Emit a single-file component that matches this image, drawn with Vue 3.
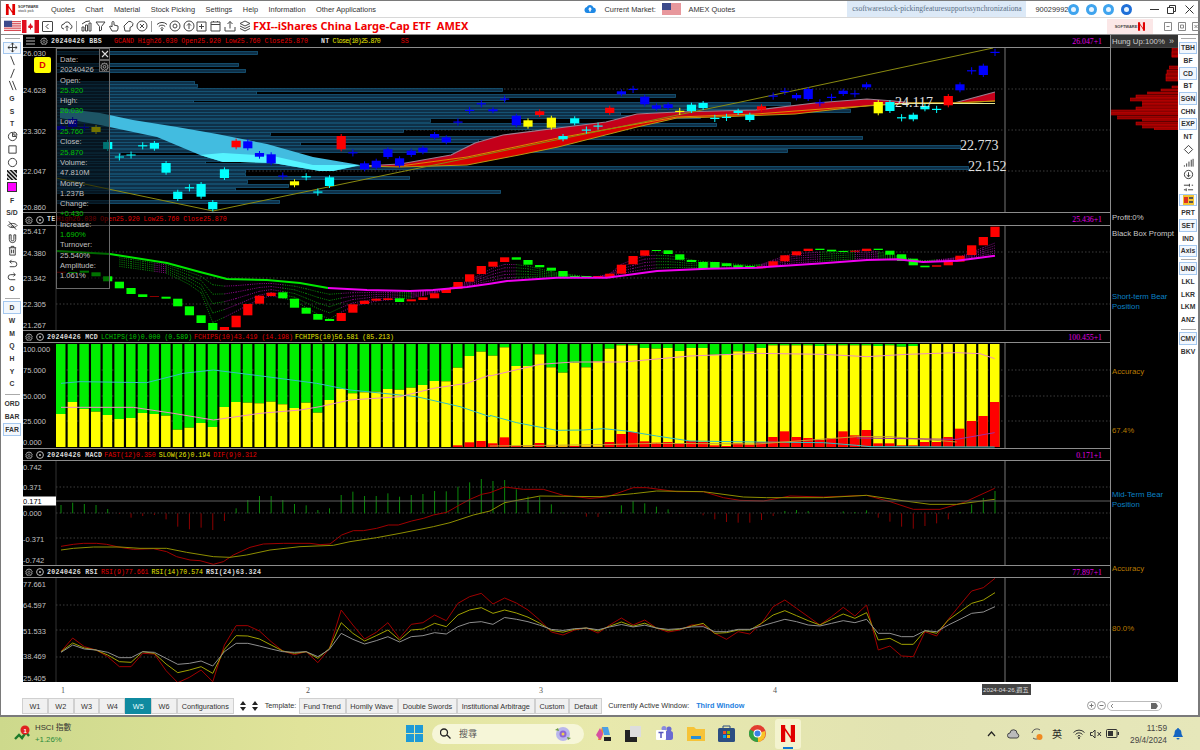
<script setup>
const X = i => 61 + 11.675 * i
const P = a => a.map(p => p.join(',')).join(' ')
const Z = (a, ox, oy) => a.map(([x, y]) => [ox + x / 3, oy + y / 3])
const lerp = (a, x) => {
  if (x <= a[0][0]) return a[0][1]
  for (let k = 1; k < a.length; k++) {
    if (x <= a[k][0]) {
      const t = (x - a[k - 1][0]) / (a[k][0] - a[k - 1][0])
      return a[k - 1][1] + (a[k][1] - a[k - 1][1]) * t
    }
  }
  return a[a.length - 1][1]
}
const colors = { b: '#0000ff', c: '#00ffff', y: '#ffff00', r: '#ff0000', g: '#00ff00', d: '#8b0000' }

/* chart 1 */
const raw1 = [[126,130,'b'],[119,127,'b'],[127,128,'b'],[127,132,'y'],[142,149,'c'],[156.5,157.5,'c'],[154.5,155.5,'c'],[145.2,146.4,'c'],[143,148.7,'c'],[163,172.7,'c'],[191.7,199,'c'],[187.2,188.4,'c'],[184,196.7,'c'],[202,209.3,'c'],[169.3,178,'c'],[140.7,147.3,'r'],[141.3,148.3,'b'],[153,156.7,'b'],[154.3,163.3,'b'],[175.5,176.7,'b'],[181.3,185.3,'y'],[176.2,177.4,'c'],[191.5,192.7,'c'],[177.3,186,'c'],[136,149.3,'r'],[152.2,153.4,'b'],[163.3,169.3,'b'],[160.7,167.7,'b'],[149.3,157,'b'],[158.3,165.7,'b'],[150.7,155,'b'],[147.7,152.3,'b'],[134,137.7,'b'],[137.3,142.3,'b'],[121.5,122.7,'b'],[109.8,111,'b'],[103.2,104.4,'b'],[109.3,111.3,'b'],[98.5,99.7,'b'],[115.7,125.3,'b'],[120.3,126.7,'y'],[111.3,115,'r'],[117.7,127.7,'y'],[136,139.3,'c'],[118.3,123.3,'c'],[129.5,130.7,'c'],[125.5,126.7,'c'],[107.7,113,'r'],[91.3,94.3,'b'],[88.8,90,'b'],[96.7,104.3,'b'],[105.3,108.7,'b'],[104.3,108,'b'],[110.8,112,'y'],[104.7,111,'c'],[103,108,'c'],[117.8,119,'c'],[116.8,118,'c'],[110.7,113,'c'],[114.7,120,'c'],[106.3,109.7,'r'],[95.5,96.7,'b'],[90.8,92,'b'],[95,98.3,'b'],[89,99,'b'],[102.2,103.4,'b'],[96.8,98,'b'],[90.7,94,'b'],[93.2,94.4,'b'],[84.3,87.3,'b'],[102,113.3,'y'],[102,111,'c'],[117.2,118.4,'c'],[114.7,119.3,'c'],[106,109.3,'c'],[108.8,110,'c'],[96,105.3,'r'],[84.3,90.3,'b'],[70.2,71.4,'b'],[65.7,75,'b'],[51.8,53,'b']]
const candle = (r, i) => {
  const doji = r[1] - r[0] < 1.8
  return { x: X(i), t: r[0], h: r[1] - r[0], c: colors[r[2]], wt: r[0] - (doji ? 3 : 2), wb: r[1] + (doji ? 3 : 2) }
}
const c1 = raw1.map(candle)
const profile = [[53,257],[65,238],[71,245],[83,194],[86,197],[90,502],[93,256],[96,675],[99,505],[102,193],[104,790],[108,762],[111,850],[114,620],[117,700],[121,430],[125,716],[128,578],[131,403],[134,270],[138,862],[141,478],[144,300],[147,960],[151,787],[155,120],[157,244],[160,293],[163,205],[165,315],[168,968],[172,245],[176,245],[178,409],[182,247],[186,288],[190,235],[192,500],[202,279]]
const bandTop = [[60,108],[100,113],[133,120],[177,127],[217,134],[267,144],[313,157],[360,165]]
const bandBot = [[360,165.5],[333,171],[320,171],[273,163],[240,162],[223,162],[200,155],[157,137],[100,125],[60,118]]
const band1 = P([...bandTop, ...bandBot])
const band2 = P([[200,155],[223,153],[273,156],[313,165],[360,165],[333,171],[320,171],[273,163],[240,162],[223,162]])
const redTop = [[362,166],[400,164],[451,155],[475,143],[503,135],[566,127],[606,122],[637,114],[677,112],[756,110],[815,103],[867,99],[894,101],[914,103],[954,103],[995,92]]
const redMid = [[400,166],[467,157],[558,138],[637,124],[677,117],[756,114],[835,108],[914,103],[954,103],[995,101]]
const redBot = [[995,101],[954,103],[914,103],[874,105],[795,114],[716,117],[677,118],[637,127],[558,147],[519,155],[467,165],[400,167],[362,166]]
const red1 = P([...redTop, ...redMid.slice().reverse()])
const red2 = P([...redMid, ...redBot])
const redMidLine = P(redMid)
const redTopLine = P(redTop)
const redBotLine = P(redBot)
const diag = P([[56,178],[213,211],[400,172],[736,103],[993,48]])

/* chart 2 */
const raw2 = [[271.7,273,'d'],[272,273,'g'],[270.7,272.7,'g'],[272.3,276.3,'g'],[276.3,281.3,'g'],[281.7,288.3,'g'],[288,294,'g'],[294.3,297,'g'],[296,297,'d'],[296.7,298.7,'g'],[298.7,306.3,'g'],[306.3,315.3,'g'],[315.3,323,'g'],[323,330,'g'],[327,330,'r'],[315.7,327.3,'r'],[304,315.3,'r'],[295.7,303.7,'r'],[292.7,296,'r'],[292.3,298.3,'g'],[298.7,307.7,'g'],[307.7,313.7,'g'],[314,319.7,'g'],[319,321,'g'],[313,321,'r'],[304.3,312.7,'r'],[300.7,304,'r'],[298.7,300.7,'r'],[298.3,300,'r'],[298.3,302,'g'],[299.3,301.3,'r'],[297.3,300,'r'],[293.3,298.3,'r'],[289,293,'r'],[282,288.7,'r'],[274.3,281.7,'r'],[266,274,'r'],[261.7,266.7,'r'],[257.3,262,'r'],[257.3,259.7,'g'],[260,264.7,'g'],[265,267.3,'g'],[267.7,270.7,'g'],[271,276.7,'g'],[276,277.7,'g'],[276,277,'g'],[276,277,'r'],[273.7,277,'r'],[264.7,273.7,'r'],[256,264.3,'r'],[250.3,255.7,'r'],[250,251,'g'],[250.3,254,'g'],[254.3,259.7,'g'],[260,262,'g'],[262,269,'g'],[262,269,'g'],[263.3,266,'g'],[265.3,268.3,'g'],[266,268.3,'g'],[266.3,268.3,'r'],[261.3,267,'r'],[255.3,261.3,'r'],[251.3,255.3,'r'],[248.7,251,'r'],[248.7,250,'g'],[249.7,251.3,'g'],[251,252,'g'],[250.7,251.7,'r'],[248.7,251,'r'],[248.7,250,'g'],[250.7,254.7,'g'],[254.3,261,'g'],[258.7,265.3,'g'],[265.7,267.3,'g'],[265.3,266.7,'r'],[262,265.3,'r'],[255.7,261.7,'r'],[245.3,255,'r'],[237,245.3,'r'],[226.7,237,'r']]
const c2 = raw2.map((r, i) => ({ x: X(i), t: r[0], h: r[1] - r[0], c: colors[r[2]] }))
const main2 = [[56,251],[110,254],[167,263],[200,272],[227,279],[267,280],[300,283],[328,288],[367,290],[410,291],[433,290],[467,287],[490,283.7],[507,281],[557,277.7],[607,277.7],[657,271],[707,268.7],[757,267.7],[823,263.3],[867,260],[897,259.3],[923,262],[957,260.7],[995,255.7]]
const env2 = [[56,252],[110,265],[167,273],[200,290],[213,323],[233,313],[267,295],[293,300],[328,320],[350,307],[376,301],[410,298],[440,292],[470,280],[490,269],[506,264],[523,265],[557,273],[590,277],[607,276],[623,263],[647,255],[673,256],[697,261],[723,263],[757,266],[790,254],[823,252],[867,250],[890,254],[910,259],[923,261],[957,258],[995,243]]
const green2 = P(main2.filter(p => p[0] <= 328))
const magenta2 = P(main2.filter(p => p[0] >= 328))
const fan = []
for (let k = 1; k <= 5; k++) {
  for (let i = 0; i < 80; i++) {
    if (X(i) < 110) continue
    const a = lerp(main2, X(i)), b = lerp(env2, X(i))
    const a2 = lerp(main2, X(i + 1)), b2 = lerp(env2, X(i + 1))
    fan.push({
      x1: X(i), x2: X(i + 1),
      y1: a + (b - a) * k / 5, y2: a2 + (b2 - a2) * k / 5,
      c: raw2[i][2] === 'g' ? '#0a8a0a' : '#8a0a8a'
    })
  }
}

/* chart 3 */
const ytL = [414,402,409,411.7,415,419,418,413,414,415.7,429.7,427.7,423,427,407,402,402.7,403.3,401.7,404.3,408,402.7,412.7,400,389,393.3,392.3,391.7,389,389.7,387.7,385,381,381.3,367.7,356,351.7,355.7]
const ytR = [364,420,420,385,424,440,410,424,406,368,358,358,366,368,366,375,366,366,386,386,376,376,366,358,358,358,358,360,358,358,358,358,360,358,362,360,354,354,354,354,354,354,354].map(z => 226 + z / 3)
const rtR = [634,660,662,651,662,662,660,662,662,648,624,618,646,650,648,652,645,648,658,660,652,656,648,633,616,633,636,642,636,616,628,612,652,652,658,658,648,648,633,608,585,570,528].map(z => 226 + z / 3)
const rtL = ytL.map((_, i) => i === 34 ? 445.3 : i === 35 ? 442.3 : i === 36 ? 441 : i === 37 ? 443.3 : 447)
const yt = [...ytL, ...ytR]
const rt = [...rtL, ...rtR]
const mcd = yt.map((y, i) => ({ x: 56 + 11.675 * i, y, r: rt[i] }))
const pink = P([...Z([[183,592],[400,592],[520,610],[640,630],[780,610],[900,600],[960,590],[1050,570],[1200,560],[1300,535],[1400,520],[1470,495]], 0, 210), ...Z([[0,450],[150,415],[250,408],[400,408],[600,390],[800,382],[1000,385],[1130,392],[1250,385],[1400,380],[1470,383],[1514,398]], 490, 226)])
const cyan = P([...Z([[183,520],[240,515],[440,518],[550,490],[640,480],[800,500],[950,520],[1050,540],[1250,560],[1380,590],[1470,620]], 0, 210), ...Z([[0,568],[80,590],[200,613],[280,612],[340,608],[410,615],[500,630],[600,645],[800,648],[1000,650],[1100,658],[1140,662],[1514,663]], 490, 226)])
const ochre = P(Z([[0,660],[340,656],[500,652],[800,654],[1100,632],[1200,632],[1300,640],[1400,648]], 490, 226))
const purple = P(Z([[1100,636],[1400,640],[1514,620]], 490, 226))

/* chart 4 */
const hL = [195,188,192,195,207,222,233,228,225,238,260,268,263,270,243,205,180,168,168,180,192,196,210,205,165,155,168,168,160,170,165,162,153,154,140,127,117].map(z => 440 + z / 3)
const hR = [765,762,790,812,812,835,860,862,872,873,858,838,825,832,842,850,860,862,868,880,888,890,890,882,870,855,852,855,862,862,856,858,853,875,887,902,908,900,892,880,858,835,816,795].map(z => 226 + z / 3)
const hist = [...hL, ...hR].map((y, i) => ({ x: X(i), y, c: y < 513.3 ? '#0a8a0a' : '#8b0000' }))
const macdRed = P([...Z([[183,319],[220,313],[250,310],[290,310],[320,313],[360,322],[400,328],[460,326],[500,335],[530,350],[570,360],[600,362],[640,373],[670,365],[700,345],[750,322],[790,312],[850,310],[930,310],[960,314],[990,312],[1025,285],[1060,272],[1090,272],[1130,265],[1165,255],[1195,255],[1235,243],[1270,235],[1300,225],[1340,217],[1375,197],[1410,178],[1445,163]], 0, 440), ...Z([[0,800],[44,783],[100,790],[160,790],[220,808],[300,817],[350,813],[430,785],[470,785],[560,797],[640,797],[700,815],[750,823],[820,825],[900,810],[1000,813],[1130,808],[1200,827],[1270,850],[1350,850],[1420,830],[1514,787]], 490, 226)])
const macdYel = P([...Z([[183,330],[220,325],[280,321],[360,321],[420,325],[500,325],[560,337],[640,350],[690,352],[740,345],[810,330],[900,320],[1000,316],[1050,305],[1130,293],[1200,280],[1300,260],[1350,248],[1420,225]], 0, 440), ...Z([[0,855],[44,830],[150,810],[330,812],[430,803],[500,795],[640,797],[760,813],[830,815],[1000,815],[1130,808],[1230,823],[1320,835],[1400,835],[1514,820]], 490, 226)])

/* chart 5 */
const rsiBuild = (l, m, r) => [...l.map(z => 440 + z / 3), ...m, ...r.map(z => 330 + z / 3)].map((y, i) => [X(i), y])
const rm = [598,603,610,620,632,635,630,628,633,625,618,625,620,628,632,630,625]
const rsiRed = P(rsiBuild([635,594,620,630,650,680,680,640,642,692,728,712,690,725,615,557,557,573,605,633,644,635,668,625,510,555,597,577,548,595,553,548,525,542,490,470,460,492], rm, [885,910,928,905,912,880,830,810,835,860,885,860,832,858,825,960,948,978,980,905,918,868,825,783,773,745]))
const rsiYel = P(rsiBuild([635,609,624,630,645,665,667,635,640,672,698,690,680,700,628,587,588,597,615,633,640,635,655,625,548,580,603,587,570,600,570,567,550,560,525,510,503,520], rm.map(y => 628 + (y - 628) * .6), [880,910,908,900,900,880,855,842,857,872,885,868,852,865,848,930,925,943,943,902,910,870,845,820,810,788]))
const rsiGry = P(rsiBuild([637,615,627,630,637,653,653,635,637,655,673,670,663,678,635,610,610,618,627,635,637,635,650,628,580,598,612,602,590,606,590,587,578,582,560,548,545,553], rm.map(y => 628 + (y - 628) * .35), [890,905,905,898,898,888,878,868,875,885,888,880,872,878,868,910,910,920,920,902,905,885,868,850,846,830]))

/* labels and lists */
const grid = { a: [89,130,171], b: [252,278,304], c: [370,396,421], d: [487,513,538], e: [605,630,657] }
const axis1 = [['26.030',53],['24.628',90],['23.302',131],['22.047',171],['20.860',207]]
const axis2 = [['25.417',231],['24.380',253],['23.342',278],['22.305',304],['21.267',325]]
const axis3 = [['100.000',349],['75.000',370],['50.000',396],['25.000',421],['0.000',442]]
const axis4 = [['0.742',467],['0.371',487],['0.000',513],['-0.371',539],['-0.742',560]]
const axis5 = [['77.661',584],['64.597',605],['51.533',631],['38.469',656],['25.405',678]]

const menus = ['Quotes', 'Chart', 'Material', 'Stock Picking', 'Settings', 'Help', 'Information', 'Other Applications']
const tip = [['Date:',0],['20240426',0],['Open:',0],['25.920',1],['High:',0],['26.030',1],['Low:',0],['25.760',1],['Close:',0],['25.870',1],['Volume:',0],['47.810M',0],['Money:',0],['1.237B',0],['Change:',0],['+0.430',1],['Increase:',0],['1.690%',1],['Turnover:',0],['25.540%',0],['Amplitude:',0],['1.061%',0]]
const leftA = ['move','\\','/','\\\\','G','S','T','pie','sq','circ','hatch','mag','F','S/D','noeye','magnet','trash','undo','redo','O']
const leftB = ['D','W','M','Q','H','Y','C']
const leftC = ['ORD','BAR','FAR']
const rightA = ['TBH','BF','CD','BT','SGN','CHN','EXP','NT','dia','mini','target','sliders','img','PRT','SET','IND','Axis']
const rightB = ['UND','LKL','LKR','LKM','ANZ']
const rightC = ['CMV','BKV']
const boxed = new Set(['move','D','FAR','TBH','CD','SGN','EXP','img','SET','Axis','UND','CMV'])
const glyph = {
  move: 'M6 1V11M1 6H11M6 1L4.5 2.8M6 1L7.5 2.8M6 11L4.5 9.2M6 11L7.5 9.2M1 6L2.8 4.5M1 6L2.8 7.5M11 6L9.2 4.5M11 6L9.2 7.5',
  '\\': 'M4 1L8 11',
  '/': 'M8 1L4 11',
  '\\\\': 'M2.5 1L6.5 11M6 1L10 11',
  pie: 'M6 1.5A4.5 4.5 0 1 0 10.5 6H6ZM7.5 1A4 4 0 0 1 11 4.5H7.5Z',
  sq: 'M2 2H10V10H2Z',
  circ: 'M10.5 6A4.5 4.5 0 1 1 1.5 6A4.5 4.5 0 1 1 10.5 6Z',
  noeye: 'M1 6C3 3 9 3 11 6C9 9 3 9 1 6ZM2 1.5L10 10.5M7.5 6A1.5 1.5 0 1 1 4.5 6',
  magnet: 'M2.5 2V7A3.5 3.5 0 0 0 9.5 7V2H7.5V7A1.5 1.5 0 0 1 4.5 7V2Z',
  trash: 'M2 3H10M4.5 3V1.5H7.5V3M3 3V11H9V3M5 5V9M7 5V9',
  undo: 'M3 4H8A2.7 2.7 0 0 1 8 9.5H3M3 4L5 2M3 4L5 6',
  redo: 'M9 4H4A2.7 2.7 0 0 0 4 9.5H9M9 4L7 2M9 4L7 6',
  dia: 'M6 1.5L10.5 6L6 10.5L1.5 6Z',
  mini: 'M1.5 10.5V9M4 10.5V7M6.5 10.5V5M9 10.5V3M11 10.5V2',
  target: 'M10.5 6A4.5 4.5 0 1 1 1.5 6A4.5 4.5 0 1 1 10.5 6ZM6 3.5V8.5M4 6.5L6 8.5L8 6.5',
  sliders: 'M1 3.5H7M9.5 3.5H11M1 8.5H3M5.5 8.5H11M7 2V5M3.5 7V10'
}
const heads = [
  { cls: 'h1', menu: true, segs: [['20240426 BBS','w',0],['GCAND High26.030 Open25.920 Low25.760 Close25.870','r',12],['NT','w',13],['Close(10)25.870','y t',3],['SS','r',21]], val: '26.047+1' },
  { cls: 'h2 tall', segs: [['TE','w',0],['High26.030 Open25.920 Low25.760 Close25.870','r',1]], val: '25.436+1' },
  { cls: 'h2', segs: [['20240426 MCD','w',0],['LCHIPS(10)0.000 (0.589)','g',3],['FCHIPS(10)43.419 (14.198)','r',2],['FCHIPS(10)56.581 (85.213)','y',2]], val: '100.455+1' },
  { cls: 'h2', segs: [['20240426 MACD','w',0],['FAST(12)0.350','r',2],['SLOW(26)0.194','y',3],['DIF(9)0.312','r',3]], val: '0.171+1' },
  { cls: 'h2', segs: [['20240426 RSI','w',0],['RSI(9)77.661','r',3],['RSI(14)70.574','y',3],['RSI(24)63.324','w',3]], val: '77.897+1' }
]
const tabs = ['W1','W2','W3','W4','W5','W6','Configurations']
const tplts = ['Fund Trend','Homily Wave','Double Swords','Institutional Arbitrage','Custom','Default']
const book = [[48,9,513],[52,4,513],[56,1,513],[66,3,505],[70,5,498],[74,4,495],[78,3,495],[86,2,513],[89,2,480],[92,2,440],[95,3,405],[98,3,388],[101,3,425],[104,4,425],[107,3,405],[110,3,332],[113,2,332],[116,3,350],[119,2,425],[122,3,405],[125,3,425],[128,2,460]]
</script>

<template>
  <div class="screen">
    <div class="win">
      <div class="titlebar">
        <div class="logo">
          <svg width="11" height="11" viewBox="0 0 10 12"><path fill="#e00000" d="M0 0H3V12H0ZM7 0H10V12H7ZM3 2L7 8V10L3 4Z"/></svg>
          <div class="logotxt"><b>SOFTWARE</b><span>stock pick</span></div>
        </div>
        <span v-for="m in menus" :key="m" class="menu">{{ m }}</span>
        <svg class="cloud" width="12" height="10" viewBox="0 0 12 10"><path fill="#1e88e5" d="M3 9A3 3 0 0 1 2.800 3.100A3.500 3.500 0 0 1 9.400 3.600A2.700 2.700 0 0 1 9 9Z"/><path fill="#fff" d="M6 3L8 5.500H6.800V7.500H5.200V5.500H4Z"/></svg>
        <span class="cm">Current Market:</span>
        <svg class="flag" width="19" height="13" viewBox="0 0 19 13"><rect width="19" height="13" fill="#fff"/><path stroke="#d0303a" d="M0 1H19M0 3H19M0 5H19M0 7H19M0 9H19M0 11H19"/><rect width="9" height="7" fill="#3c4a8c"/></svg>
        <span class="amex">AMEX Quotes</span>
        <span class="ticker">csoftwarestock-pickingfeaturesupportssynchronizationa</span>
        <span class="uid">90029992</span>
        <span class="dots">
          <svg v-for="k in 4" :key="k" width="11" height="11" viewBox="0 0 11 11"><circle cx="5.500" cy="5.500" r="5.500" :fill="k === 4 ? '#1f6fd8' : '#3fa4ee'"/><circle cx="5.500" cy="5.500" r="2.500" fill="#e8f4ff"/></svg>
        </span>
        <span class="winbtns">
          <svg width="9" height="9" viewBox="0 0 9 9"><path stroke="#333" d="M0 4.500H9"/></svg>
          <svg width="9" height="9" viewBox="0 0 9 9"><path fill="none" stroke="#333" d="M.5 2.500H6.500V8.500H.5ZM2.500 2.500V.5H8.500V6.500H6.500"/></svg>
          <svg width="9" height="9" viewBox="0 0 9 9"><path stroke="#333" d="M.5 .5L8.500 8.500M8.500 .5L.5 8.500"/></svg>
        </span>
      </div>

      <div class="toolbar">
        <svg class="f1" width="17" height="13" viewBox="0 0 19 13"><rect width="19" height="13" fill="#fff"/><path stroke="#d0303a" d="M0 1H19M0 3H19M0 5H19M0 7H19M0 9H19M0 11H19"/><rect width="9" height="7" fill="#3c4a8c"/></svg>
        <svg class="f2" width="17" height="13" viewBox="0 0 17 13"><rect width="17" height="13" fill="#fff"/><rect width="4.500" height="13" fill="#e01020"/><rect x="12.500" width="4.500" height="13" fill="#e01020"/><path fill="#e01020" d="M8.500 3L10 6L11 5.500L10.500 8H9V9.500H8V8H6.500L6 5.500L7 6Z"/></svg>
        <svg class="tb m3" width="11" height="11" viewBox="0 0 11 11"><path fill="none" stroke="#444" d="M1 .5H10A.5 .5 0 0 1 10.500 1V10A.5 .5 0 0 1 10 10.500H1A.5 .5 0 0 1 .5 10V1A.5 .5 0 0 1 1 .5ZM6.500 3L4 5.500L6.500 8"/></svg>
        <svg class="tb m8" width="12" height="12" viewBox="0 0 12 12"><path fill="none" stroke="#444" d="M3 9A2.500 2.500 0 0 1 3 4A3.300 3.300 0 0 1 9.300 4.500A2.300 2.300 0 0 1 9 9M6 11V6M4.300 7.500L6 5.800L7.700 7.500"/></svg>
        <span class="sep"></span>
        <svg class="tb" width="11" height="12" viewBox="0 0 11 12"><path fill="none" stroke="#444" d="M1 11V7H3V11ZM4.500 11V5H6.500V11ZM8 11V3H10V11ZM1 4L5 1.500L9 1"/></svg>
        <svg class="tb m3" width="11" height="12" viewBox="0 0 11 12"><path fill="none" stroke="#444" d="M1 2H10L6.500 6.500V10L4.500 11V6.500Z"/></svg>
        <svg class="tb m2" width="12" height="12" viewBox="0 0 12 12"><path fill="none" stroke="#444" d="M4 11L1.500 6.500L3 6L4 7V2.500A1 1 0 0 1 6 2.500V5L10 6V9L9 11Z"/></svg>
        <svg class="tb m2" width="12" height="12" viewBox="0 0 12 12"><path fill="none" stroke="#444" d="M3 11L2 6L5 3A3 3 0 0 1 10.500 6L8 7.500V11Z"/></svg>
        <svg class="tb m2" width="12" height="12" viewBox="0 0 12 12"><path fill="none" stroke="#444" d="M11 6A5 5 0 1 1 1 6A5 5 0 1 1 11 6ZM4 4L8 8M8 4L4 8"/></svg>
        <span class="sep"></span>
        <svg class="tb" width="12" height="12" viewBox="0 0 12 12"><path fill="none" stroke="#444" d="M1 4.500A7 7 0 0 1 11 4.500M2.800 6.500A4.500 4.500 0 0 1 9.200 6.500M4.500 8.500A2 2 0 0 1 7.500 8.500"/><circle cx="6" cy="10" r="1" fill="#444"/></svg>
        <svg class="tb m1" width="12" height="12" viewBox="0 0 12 12"><path fill="none" stroke="#444" d="M11 6A5 5 0 1 1 1 6A5 5 0 1 1 11 6ZM8 6A2 2 0 1 1 4 6A2 2 0 1 1 8 6Z"/></svg>
        <svg class="tb m2" width="12" height="12" viewBox="0 0 12 12"><path fill="none" stroke="#444" d="M11 6A5 5 0 1 1 1 6A5 5 0 1 1 11 6ZM6 9V3.500M4 5.500L6 3.500L8 5.500"/></svg>
        <svg class="tb m1" width="11" height="11" viewBox="0 0 11 11"><path fill="none" stroke="#444" d="M1 1H10V10H1ZM5.500 3V8M3 5.500H8"/></svg>
        <svg class="tb m3" width="11" height="11" viewBox="0 0 11 11"><path fill="none" stroke="#444" d="M1 1H10V10H1ZM1 3.500H10M3.500 0V1M7.500 0V1"/></svg>
        <svg class="tb m3" width="12" height="12" viewBox="0 0 12 12"><path fill="none" stroke="#444" d="M1 7V11H11V7M6 8.500V1.500M3.500 4L6 1.500L8.500 4"/></svg>
        <svg class="tb m3" width="12" height="12" viewBox="0 0 12 12"><path fill="none" stroke="#444" d="M6 1L11 3.500L6 6L1 3.500ZM1 6L6 8.500L11 6M1 8.500L6 11L11 8.500"/></svg>
        <span class="title">FXI--iShares China Large-Cap ETF&nbsp;&nbsp;AMEX</span>
        <span class="pinkbox">
          <span>SOFTWARE</span>
          <svg width="7" height="9" viewBox="0 0 10 12"><path fill="#e00000" d="M0 0H3V12H0ZM7 0H10V12H7ZM3 2L7 8V10L3 4Z"/></svg>
        </span>
        <span class="miniwin">
          <svg width="8" height="9" viewBox="0 0 8 9"><path fill="none" stroke="#888" d="M.5 .5H7.500V8.500H.5ZM2.500 4.500H5.500"/></svg>
          <svg width="8" height="9" viewBox="0 0 8 9"><path fill="none" stroke="#888" d="M.5 .5H7.500V8.500H.5ZM2.500 3H5.500V6H2.500Z"/></svg>
          <svg width="8" height="9" viewBox="0 0 8 9"><path fill="none" stroke="#888" d="M.5 .5H7.500V8.500H.5ZM2.500 3L5.500 6M5.500 3L2.500 6"/></svg>
        </span>
      </div>

      <div class="mainrow">
        <div class="tools left">
          <i class="rule first"></i>
          <div v-for="t in leftA" :key="t" class="tool" :class="{ box: boxed.has(t) }">
            <svg v-if="glyph[t]" width="11" height="11" viewBox="0 0 12 12"><path :d="glyph[t]" fill="none" stroke="#333"/></svg>
            <i v-else-if="t === 'hatch'" class="hatch"></i>
            <i v-else-if="t === 'mag'" class="mag"></i>
            <template v-else>{{ t }}</template>
          </div>
          <i class="rule"></i>
          <div v-for="t in leftB" :key="t" class="tool" :class="{ box: boxed.has(t) }">{{ t }}</div>
          <i class="rule lc"></i>
          <div v-for="t in leftC" :key="t" class="tool" :class="{ box: boxed.has(t) }">{{ t }}</div>
        </div>

        <div class="charts">
          <div class="dbadge">D</div>
          <div class="tipbox">
            <div v-for="(l, k) in tip" :key="k" class="tipline" :class="{ gv: l[1] }">{{ l[0] }}</div>
            <span class="tipx">
              <svg width="8" height="8" viewBox="0 0 8 8"><path stroke="#ddd" stroke-width="1.100" d="M1 1L7 7M7 1L1 7"/></svg>
            </span>
            <span class="tipg">
              <svg width="9" height="9" viewBox="0 0 12 12"><path fill="none" stroke="#bbb" d="M6 1L7 2.600L9 2L9.300 4L11 5L10 6.500L11 8L9.300 8.800L9 11L7 10.200L6 11.500L5 10.200L3 11L2.700 8.800L1 8L2 6.500L1 5L2.700 4L3 2L5 2.600Z"/><circle cx="6" cy="6.400" r="1.800" fill="none" stroke="#bbb"/></svg>
            </span>
          </div>

          <template v-for="(h, hi) in heads" :key="hi">
            <div class="head" :class="h.cls">
              <svg v-if="h.menu" class="hico" width="9" height="8" viewBox="0 0 9 8"><path stroke="#bbb" d="M0 1H9M0 4H9M0 7H9"/></svg>
              <svg class="hico" width="8" height="8" viewBox="0 0 12 12"><path fill="none" stroke="#bbb" stroke-width="1.200" d="M6 1L7 2.600L9 2L9.300 4L11 5L10 6.500L11 8L9.300 8.800L9 11L7 10.200L6 11.500L5 10.200L3 11L2.700 8.800L1 8L2 6.500L1 5L2.700 4L3 2L5 2.600Z"/><circle cx="6" cy="6.400" r="1.800" fill="none" stroke="#bbb"/></svg>
              <svg v-if="!h.menu" class="hico" width="8" height="8" viewBox="0 0 8 8"><circle cx="4" cy="4" r="3.400" fill="none" stroke="#bbb"/><circle cx="4" cy="4" r="1" fill="#bbb"/></svg>
              <span v-for="(s, si) in h.segs" :key="si" class="seg" :class="s[1]" :style="{ marginLeft: s[2] + 'px' }">{{ s[0] }}</span>
              <span class="hval">{{ h.val }}</span>
            </div>

            <svg v-if="hi === 0" class="plot" width="1087" height="164" viewBox="23 48 1087 164">
              <line x1="56" y1="48" x2="56" y2="212" stroke="#333"/>
              <line x1="1005" y1="48" x2="1005" y2="212" stroke="#777"/>
              <line v-for="y in grid.a" :key="y" x1="56" :y1="y" x2="1110" :y2="y" stroke="#3c3c3c" stroke-dasharray="1.500 2"/>
              <rect v-for="(b, k) in profile" :key="'p' + k" x="56.500" :y="b[0] - 1.500" :width="b[1] - 56" height="3" fill="#0e3048" stroke="#17587a" stroke-width=".8"/>
              <polygon :points="band1" fill="#42bce0"/>
              <polygon :points="band2" fill="#55f4ff"/>
              <polygon :points="red1" fill="#c4001a"/>
              <polygon :points="red2" fill="#d80000"/>
              <polyline :points="redTopLine" fill="none" stroke="#9a7f90" stroke-width="1.200"/>
              <polyline :points="redMidLine" fill="none" stroke="#e08a00"/>
              <polyline :points="redBotLine" fill="none" stroke="#b89a10"/>
              <polyline :points="diag" fill="none" stroke="#8a8a10"/>
              <line x1="895" y1="103.500" x2="995" y2="103.500" stroke="#e8e890"/>
              <g v-for="(c, k) in c1" :key="'c' + k">
                <line :x1="c.x" :y1="c.wt" :x2="c.x" :y2="c.wb" :stroke="c.c"/>
                <rect :x="c.x - 4.600" :y="c.t" width="9.200" :height="c.h" :fill="c.c"/>
              </g>
              <text v-for="a in axis1" :key="a[0]" class="ax" x="23" :y="a[1] + 3">{{ a[0] }}</text>
              <text class="big" x="895" y="107">24.117</text>
              <text class="big" x="960" y="150">22.773</text>
              <text class="big" x="968" y="171">22.152</text>
            </svg>

            <svg v-if="hi === 1" class="plot" width="1087" height="104" viewBox="23 226 1087 104">
              <line x1="56" y1="226" x2="56" y2="330" stroke="#333"/>
              <line x1="1005" y1="226" x2="1005" y2="330" stroke="#777"/>
              <line v-for="y in grid.b" :key="y" x1="56" :y1="y" x2="1110" :y2="y" stroke="#3c3c3c" stroke-dasharray="1.500 2"/>
              <line v-for="(f, k) in fan" :key="'f' + k" :x1="f.x1" :y1="f.y1" :x2="f.x2" :y2="f.y2" :stroke="f.c" stroke-dasharray="1 1.200"/>
              <rect v-for="(c, k) in c2" :key="'k' + k" :x="c.x - 4.600" :y="c.t" width="9.200" :height="c.h" :fill="c.c"/>
              <polyline :points="green2" fill="none" stroke="#00e800" stroke-width="2"/>
              <polyline :points="magenta2" fill="none" stroke="#f000f0" stroke-width="2"/>
              <text v-for="a in axis2" :key="a[0]" class="ax" x="23" :y="a[1] + 3">{{ a[0] }}</text>
            </svg>

            <svg v-if="hi === 2" class="plot" width="1087" height="105" viewBox="23 343 1087 105">
              <line x1="1005" y1="343" x2="1005" y2="448" stroke="#777"/>
              <line v-for="y in grid.c" :key="y" x1="56" :y1="y" x2="1110" :y2="y" stroke="#3c3c3c" stroke-dasharray="1.500 2"/>
              <g v-for="(b, k) in mcd" :key="'m' + k">
                <rect :x="b.x" y="344" width="9.500" :height="b.y - 344" fill="#00ee00"/>
                <rect :x="b.x" :y="b.y" width="9.500" :height="447 - b.y" fill="#ffff00"/>
                <rect :x="b.x" :y="b.r" width="9.500" :height="447 - b.r" fill="#ff0000"/>
              </g>
              <polyline :points="cyan" fill="none" stroke="#30c0c0"/>
              <polyline :points="ochre" fill="none" stroke="#c8a030"/>
              <polyline :points="purple" fill="none" stroke="#a030a0"/>
              <polyline :points="pink" fill="none" stroke="#f08cc0"/>
              <text v-for="a in axis3" :key="a[0]" class="ax" x="23" :y="a[1] + 3">{{ a[0] }}</text>
            </svg>

            <svg v-if="hi === 3" class="plot" width="1087" height="104" viewBox="23 461 1087 104">
              <line x1="56" y1="461" x2="56" y2="565" stroke="#333"/>
              <line x1="1005" y1="461" x2="1005" y2="565" stroke="#777"/>
              <line v-for="y in grid.d" :key="y" x1="56" :y1="y" x2="1110" :y2="y" stroke="#3c3c3c" stroke-dasharray="1.500 2"/>
              <line v-for="(h2, k) in hist" :key="'h' + k" :x1="h2.x" :y1="h2.y" :x2="h2.x" y2="513.300" :stroke="h2.c"/>
              <polyline :points="macdRed" fill="none" stroke="#a00000"/>
              <polyline :points="macdYel" fill="none" stroke="#8e8e00"/>
              <line x1="56" y1="501" x2="1110" y2="501" stroke="#606060"/>
              <rect x="23" y="496.500" width="33" height="9" fill="#fff"/>
              <text class="ax dark" x="23" y="504">0.171</text>
              <text v-for="a in axis4" :key="a[0]" class="ax" x="23" :y="a[1] + 3">{{ a[0] }}</text>
            </svg>

            <svg v-if="hi === 4" class="plot" width="1087" height="104" viewBox="23 578 1087 104">
              <line x1="56" y1="578" x2="56" y2="682" stroke="#333"/>
              <line x1="1005" y1="578" x2="1005" y2="682" stroke="#777"/>
              <line v-for="y in grid.e" :key="y" x1="56" :y1="y" x2="1110" :y2="y" stroke="#3c3c3c" stroke-dasharray="1.500 2"/>
              <polyline :points="rsiRed" fill="none" stroke="#a00000"/>
              <polyline :points="rsiYel" fill="none" stroke="#a0a000"/>
              <polyline :points="rsiGry" fill="none" stroke="#8e8e8e"/>
              <text v-for="a in axis5" :key="a[0]" class="ax" x="23" :y="a[1] + 3">{{ a[0] }}</text>
            </svg>
          </template>
        </div>

        <div class="side">
          <div class="hung"><span>Hung Up:100%</span><span class="chev">»</span></div>
          <svg class="booksvg" width="67" height="82" viewBox="1110 48 67 82">
            <rect v-for="(b, k) in book" :key="k" :x="1000 + b[2] / 3" :y="b[0]" :width="1177 - 1000 - b[2] / 3" :height="b[1]" fill="#8b0000" stroke="#e00000" stroke-width=".5"/>
          </svg>
          <div class="sl m83">Profit:0%</div>
          <div class="sl m6">Black Box Prompt</div>
          <div class="sl blue m53">Short-term Bear Position</div>
          <div class="sl or m55">Accuracy</div>
          <div class="sl or m49">67.4%</div>
          <div class="sl blue m54">Mid-Term Bear Position</div>
          <div class="sl or m54">Accuracy</div>
          <div class="sl or m50">80.0%</div>
        </div>

        <div class="tools right">
          <i class="rule first"></i>
          <div v-for="t in rightA" :key="t" class="tool" :class="{ box: boxed.has(t) }">
            <svg v-if="glyph[t]" width="11" height="11" viewBox="0 0 12 12"><path :d="glyph[t]" fill="none" stroke="#333"/></svg>
            <svg v-else-if="t === 'img'" width="11" height="10" viewBox="0 0 11 10"><rect width="11" height="10" fill="#f2c230"/><rect x="1" y="2" width="4" height="6" fill="#e03020"/><rect x="6" y="2" width="4" height="2" fill="#555"/><rect x="6" y="6" width="4" height="2" fill="#555"/></svg>
            <template v-else>{{ t }}</template>
          </div>
          <i class="rule r1"></i>
          <div v-for="t in rightB" :key="t" class="tool" :class="{ box: boxed.has(t) }">{{ t }}</div>
          <i class="rule r2"></i>
          <div v-for="t in rightC" :key="t" class="tool" :class="{ box: boxed.has(t) }">{{ t }}</div>
        </div>
      </div>

      <svg class="axisrow" width="1198" height="15" viewBox="0 682 1198 15">
        <text class="xl" x="60" y="693">1</text>
        <text class="xl" x="305" y="693">2</text>
        <text class="xl" x="538" y="693">3</text>
        <text class="xl" x="772" y="693">4</text>
        <rect x="981" y="684" width="49" height="11" fill="#444"/>
        <text class="xd" x="982" y="692">2024-04-26,週五</text>
      </svg>

      <div class="tabs">
        <span v-for="t in tabs" :key="t" class="btn" :class="{ on: t === 'W5', wn: t.length === 2 }">{{ t }}</span>
        <svg class="ud" width="18" height="12" viewBox="0 0 18 12"><path fill="#222" d="M3 1L6 5H0ZM3 11L0 7H6ZM15 1L18 5H12ZM15 11L12 7H18Z"/></svg>
        <span class="tpl">Template:</span>
        <span v-for="t in tplts" :key="t" class="btn">{{ t }}</span>
        <span class="act">Currently Active Window:</span>
        <span class="third">Third Window</span>
        <span class="zoomctl">
          <svg width="9" height="9" viewBox="0 0 9 9"><circle cx="4.500" cy="4.500" r="4" fill="none" stroke="#999"/><path stroke="#777" d="M2.500 4.500H6.500M4.500 2.500V6.500"/></svg>
          <svg width="9" height="9" viewBox="0 0 9 9"><circle cx="4.500" cy="4.500" r="4" fill="none" stroke="#999"/><path stroke="#777" d="M2.500 4.500H6.500"/></svg>
          <svg width="55" height="10" viewBox="0 0 55 10"><rect x=".5" y=".5" width="54" height="9" rx="4.500" fill="#fff" stroke="#bbb"/><path fill="none" stroke="#888" d="M6 3L4 5L6 7"/><path fill="#666" d="M44 2H49L51 5L49 8H44Z"/></svg>
        </span>
      </div>
    </div>

    <div class="taskbar">
      <svg class="hs" width="17" height="18" viewBox="0 0 17 18"><path fill="none" stroke="#1c7a2a" stroke-width="2.400" d="M1 14L5 10L8 13L12 7L15 11"/><circle cx="11" cy="5" r="4.500" fill="#e02020"/><text x="9.600" y="7.500" class="bd">1</text></svg>
      <div class="hstx"><div class="hs1">HSCI 指數</div><div class="hs2">+1.26%</div></div>
      <svg class="winlogo" width="17" height="17" viewBox="0 0 17 17"><path fill="#1e9ad6" d="M0 0H8V8H0ZM9 0H17V8H9ZM0 9H8V17H0ZM9 9H17V17H9Z"/></svg>
      <div class="search">
        <svg width="11" height="11" viewBox="0 0 11 11"><path fill="none" stroke="#222" stroke-width="1.300" d="M7.500 4.500A3.500 3.500 0 1 1 .5 4.500A3.500 3.500 0 1 1 7.500 4.500ZM7 7L10.500 10.500"/></svg>
        <span class="st">搜尋</span>
        <svg class="fl" width="16" height="16" viewBox="0 0 16 16"><circle cx="8" cy="8" r="7" fill="#b9b6ec"/><circle cx="8" cy="8" r="3.500" fill="#8d66d6"/><circle cx="8" cy="8" r="1.500" fill="#f0d050"/><path fill="#6b9a40" d="M0 4L3 2L4 5ZM16 12L13 14L12 11Z"/></svg>
      </div>
      <svg class="ti i1" width="16" height="17" viewBox="0 0 16 17"><path fill="#f28a2a" d="M3 15L7 2H10L6 15Z"/><path fill="#4aa0e6" d="M7 2H13L15 10H9Z"/><path fill="#d64fa0" d="M1 10L5 3L8 9L5 15Z"/><rect x="9" y="12" width="7" height="4" fill="#222"/></svg>
      <svg class="ti i2" width="16" height="16" viewBox="0 0 16 16"><rect y="4" width="12" height="12" fill="#222"/><rect x="5" width="11" height="11" fill="#ddd"/></svg>
      <svg class="ti i3" width="17" height="16" viewBox="0 0 17 16"><circle cx="13" cy="3" r="2.500" fill="#6a6ad2"/><rect x="8" y="5" width="9" height="9" rx="2.500" fill="#6a6ad2"/><circle cx="8" cy="2.500" r="2.500" fill="#8a8ae0"/><rect x="0" y="4" width="10" height="10" rx="1" fill="#fff"/><path stroke="#5555bb" stroke-width="1.500" d="M2.500 6.500H7.500M5 6.500V12"/></svg>
      <svg class="ti i4" width="18" height="16" viewBox="0 0 18 16"><path fill="#f6c338" d="M0 1H7L9 3H18V15H0Z"/><rect x="4" y="10" width="10" height="3" fill="#2a8fd8"/></svg>
      <svg class="ti i5" width="17" height="17" viewBox="0 0 17 17"><rect y="3" width="17" height="14" rx="1.500" fill="#2c4e82"/><path fill="none" stroke="#2c4e82" d="M5 3V1H12V3"/><rect x="5" y="6" width="3" height="3" fill="#f25022"/><rect x="9" y="6" width="3" height="3" fill="#7fba00"/><rect x="5" y="10" width="3" height="3" fill="#00a4ef"/><rect x="9" y="10" width="3" height="3" fill="#ffb900"/></svg>
      <svg class="ti i6" width="17" height="17" viewBox="0 0 17 17"><circle cx="8.500" cy="8.500" r="8.500" fill="#e23c30"/><path fill="#f7c428" d="M8.500 8.500L16 6A8.500 8.500 0 0 1 9 17Z"/><path fill="#2fa344" d="M8.500 8.500L9 17A8.500 8.500 0 0 1 1 4.500Z"/><circle cx="8.500" cy="8.500" r="4" fill="#fff"/><circle cx="8.500" cy="8.500" r="3" fill="#3a80e6"/></svg>
      <span class="appbox">
        <svg width="14" height="17" viewBox="0 0 10 12"><path fill="#e00000" d="M0 0H3V12H0ZM7 0H10V12H7ZM3 2L7 8V10L3 4Z"/></svg>
        <i class="underline"></i>
      </span>
      <svg class="tr t1" width="9" height="6" viewBox="0 0 9 6"><path fill="none" stroke="#222" stroke-width="1.200" d="M1 5L4.500 1L8 5"/></svg>
      <svg class="tr t2" width="13" height="10" viewBox="0 0 13 10"><path fill="#bbb" stroke="#444" d="M3 9A2.500 2.500 0 0 1 3 4A3.500 3.500 0 0 1 10 4.500A2.300 2.300 0 0 1 10 9Z"/></svg>
      <svg class="tr t3" width="13" height="14" viewBox="0 0 13 14"><path fill="none" stroke="#555" d="M2 6A5 5 0 0 1 10 3M11 8A5 5 0 0 1 3 11"/><circle cx="9.500" cy="10" r="3" fill="#f08a20"/></svg>
      <span class="lang">英</span>
      <svg class="tr t4" width="12" height="10" viewBox="0 0 12 10"><path fill="none" stroke="#333" d="M.5 3.500A7.500 7.500 0 0 1 11.500 3.500M2.500 5.500A4.500 4.500 0 0 1 9.500 5.500M4.300 7.500A2 2 0 0 1 7.700 7.500"/><circle cx="6" cy="9" r="1" fill="#333"/></svg>
      <svg class="tr t5" width="12" height="10" viewBox="0 0 12 10"><path fill="none" stroke="#333" d="M.5 3.500H2.500L5 1V9L2.500 6.500H.5ZM7.500 3L11 7M11 3L7.500 7"/></svg>
      <svg class="tr t6" width="13" height="9" viewBox="0 0 13 9"><rect x=".5" y=".5" width="10.500" height="8" rx="1" fill="none" stroke="#333"/><rect x="2" y="2" width="5" height="5" fill="#333"/><rect x="11.500" y="3" width="1.500" height="3" fill="#333"/></svg>
      <div class="clock"><div>11:59</div><div>29/4/2024</div></div>
      <svg class="bell" width="10" height="12" viewBox="0 0 10 12"><path fill="#1565c0" d="M5 0A1 1 0 0 1 6 1C8 1.500 8.500 3.500 8.500 6L10 9H0L1.500 6C1.500 3.500 2 1.500 4 1A1 1 0 0 1 5 0ZM3.500 10H6.500A1.500 1.500 0 0 1 3.500 10Z"/></svg>
    </div>
  </div>
</template>

<style>
html, body { margin: 0; padding: 0; background: #fff; overflow: hidden; }
</style>

<style scoped>
.screen { width: 1200px; height: 750px; font-family: "Liberation Sans", "Noto Sans CJK TC", sans-serif; display: flex; flex-direction: column; overflow: hidden; }
.win { height: 717px; box-sizing: border-box; background: #fff; border: 1px solid #7a7a7a; border-width: 1px 2px 2px 1px; display: flex; flex-direction: column; flex: none; }
.titlebar { height: 16px; display: flex; align-items: center; border-bottom: 1px solid #d8d8d8; flex: none; color: #333; font-size: 7.400px; }
.logo { width: 50px; display: flex; align-items: center; padding-left: 4px; box-sizing: border-box; gap: 2px; flex: none; }
.logotxt { display: flex; flex-direction: column; font-size: 3.600px; line-height: 4.200px; color: #333; }
.menu { margin-right: 10.500px; white-space: nowrap; }
.cloud { margin-left: 198px; }
.cm { margin-left: 8px; width: 55px; white-space: nowrap; }
.flag { margin-left: 3px; }
.amex { margin-left: 7px; width: 50px; white-space: nowrap; }
.ticker { margin-left: 109px; width: 179px; height: 16px; line-height: 16px; background: #dce9f7; color: #5a6f86; font-family: "Liberation Serif", serif; font-size: 7.600px; overflow: hidden; white-space: nowrap; text-align: center; }
.uid { margin-left: 9px; width: 33px; white-space: nowrap; }
.dots { display: flex; gap: 6.500px; margin-left: 0; }
.winbtns { display: flex; gap: 8.500px; margin-left: 18px; }
.toolbar { height: 16px; display: flex; align-items: center; border-bottom: 1px solid #8a8a8a; flex: none; }
.f1 { margin-left: 3px; flex: none; }
.f2 { margin-left: 1px; flex: none; }
.tb { flex: none; }
.m8 { margin-left: 8px; }
.m1 { margin-left: 1px; }
.m2 { margin-left: 2px; }
.m3 { margin-left: 3px; }
.sep { width: 1px; height: 11px; background: #999; margin: 0 4px 0 3px; flex: none; }
.title { margin-left: 2px; color: #f00000; font-family: "Noto Sans", sans-serif; font-weight: 700; font-size: 11px; white-space: nowrap; width: 854px; flex: none; line-height: 16px; }
.pinkbox { width: 46px; height: 15px; background: #fbe7e7; display: flex; align-items: center; justify-content: center; gap: 1px; font-size: 4px; font-weight: 700; color: #444; flex: none; }
.miniwin { display: flex; gap: 6px; margin-left: 11px; }
.mainrow { display: grid; grid-template-columns: 22px 1087px 68px 20px; height: 647px; flex: none; }
.tools { background: #fff; display: flex; flex-direction: column; align-items: center; font-size: 6.800px; font-weight: 700; color: #333; }
.tool { height: 12.700px; width: 18px; box-sizing: border-box; display: flex; align-items: center; justify-content: center; flex: none; white-space: nowrap; }
.tool.box { border: 1px solid #a5c8ef; background: #f2f7fd; }
.rule { display: block; height: 1px; width: 15px; background: #aaa; margin: 2.800px 0 2.450px; flex: none; }
.rule.first { margin: 3px 0 2.500px; }
.rule.lc { margin: 3.300px 0 2.950px; }
.rule.r1 { margin: 2px 0 2.250px; }
.rule.r2 { margin: 2.800px 0 2.500px; }
.hatch { display: block; width: 10px; height: 10px; background: repeating-linear-gradient(45deg, #222 0 1.500px, #bbb 1.500px 3px); }
.mag { display: block; width: 10px; height: 10px; background: #ff00ff; border: 1px solid #333; box-sizing: border-box; }
.charts { position: relative; background: #000; display: flex; flex-direction: column; overflow: hidden; }
.head { display: flex; align-items: center; flex: none; box-sizing: border-box; border-bottom: 1px solid #8c8c8c; height: 13px; padding-left: 2px; background: #000; }
.head.h1 { padding-left: 3px; }
.head.h2 { border-top: 1px solid #8c8c8c; padding-top: 1px; }
.head.tall { height: 14px; }
.h1 .hico:first-child { margin-right: 5px; }
.hico { margin-right: 3px; flex: none; }
.seg { font-family: "Liberation Mono", monospace; font-size: 6.600px; white-space: nowrap; line-height: 11px; }
.seg.w { color: #ddd; font-weight: 700; letter-spacing: .3px; }
.seg.r { color: #e00000; }
.seg.y { color: #e8e800; }
.seg.g { color: #00c800; }
.seg.t { letter-spacing: -.8px; }
.hval { margin-left: auto; margin-right: 8px; color: #e000e0; font-size: 7.800px; font-family: "Liberation Serif", serif; }
.plot { display: block; flex: none; }
.ax { font-family: "Liberation Sans", sans-serif; font-size: 7.500px; fill: #c0c0c0; }
.ax.dark { fill: #000; }
.big { font-family: "Liberation Serif", serif; font-size: 14px; fill: #e0e0e0; }
.dbadge { position: absolute; left: 11px; top: 22px; width: 17px; height: 16px; background: #ffff00; border-radius: 2px; color: #e00000; font-weight: 700; font-size: 9px; line-height: 16px; text-align: center; z-index: 3; }
.tipbox { position: absolute; left: 33px; top: 13px; width: 54px; height: 241px; box-sizing: border-box; border: 1px solid #6a6a6a; background: rgba(0,0,0,.55); padding: 6px 0 0 3px; z-index: 2; }
.tipline { height: 10.300px; line-height: 10.300px; font-size: 7.600px; color: #c0c0c0; white-space: nowrap; }
.tipline.gv { color: #00c000; }
.tipx, .tipg { position: absolute; right: -1px; width: 11px; height: 12px; border: 1px solid #666; box-sizing: border-box; display: flex; align-items: center; justify-content: center; background: #111; }
.tipx { top: -1px; }
.tipg { top: 11px; }
.side { background: #000; border-left: 1px solid #8c8c8c; box-sizing: border-box; display: flex; flex-direction: column; }
.hung { height: 13px; flex: none; background: #333; color: #ccc; font-size: 7.800px; display: flex; justify-content: space-between; align-items: center; padding: 0 4px 0 1px; border-bottom: 1px solid #444; box-sizing: border-box; }
.chev { font-size: 9px; }
.booksvg { display: block; flex: none; }
.sl { font-size: 7.800px; line-height: 10px; color: #c8c8c8; padding-left: 1px; width: 62px; white-space: normal; }
.sl.m6 { white-space: nowrap; }
.blue { color: #0a80c4; }
.or { color: #b87a00; }
.m83 { margin-top: 83px; }
.m6 { margin-top: 6px; }
.m53 { margin-top: 53px; }
.m54 { margin-top: 54px; }
.m55 { margin-top: 55px; }
.m49 { margin-top: 49px; }
.m50 { margin-top: 50px; }
.axisrow { display: block; flex: none; }
.xl { font-family: "Liberation Serif", serif; font-size: 8px; fill: #555; }
.xd { font-family: "Liberation Sans", "Noto Sans CJK TC", sans-serif; font-size: 6.200px; fill: #ddd; }
.tabs { height: 17px; display: flex; align-items: center; padding-left: 21px; flex: none; font-size: 7.300px; color: #333; }
.btn { height: 16px; line-height: 15px; box-sizing: border-box; border: 1px solid #d0d0d0; background: #f0f0f0; padding: 0 3.800px; white-space: nowrap; flex: none; color: #333; }
.btn.wn { width: 25.830px; padding: 0; text-align: center; }
.btn.on { background: #0f8aa0; color: #e8ffff; border-color: #0f8aa0; }
.ud { margin: 0 7px 0 6px; flex: none; }
.tpl { margin-right: 2px; width: 32px; white-space: nowrap; }
.act { margin-left: 6px; width: 88px; white-space: nowrap; }
.third { color: #1e7fe0; font-weight: 700; width: 60px; white-space: nowrap; }
.zoomctl { margin-left: auto; margin-right: 36px; display: flex; align-items: center; gap: 1px; }
.taskbar { height: 33px; flex: none; display: flex; align-items: center; background: linear-gradient(90deg, #cdd98c 0%, #e0e39a 25%, #e8e9ac 50%, #e2e3b2 75%, #e6e7ba 100%); position: relative; }
.hs { margin-left: 14px; flex: none; }
.hstx { margin-left: 4px; width: 37px; font-size: 7.800px; line-height: 12px; }
.hs1 { color: #333; white-space: nowrap; }
.hs2 { color: #2a8a3a; }
.bd { font-size: 6px; font-weight: 700; fill: #fff; }
.winlogo { margin-left: 334px; flex: none; }
.search { margin-left: 9px; width: 152px; height: 20px; box-sizing: border-box; background: #f6f6d8; border-radius: 10px; display: flex; align-items: center; padding: 0 13px 0 8px; flex: none; }
.st { margin-left: 8px; color: #555; font-size: 9px; }
.fl { margin-left: auto; }
.ti { flex: none; }
.i1 { margin-left: 11px; }
.i2 { margin-left: 14px; }
.i3 { margin-left: 15px; }
.i4 { margin-left: 14px; }
.i5 { margin-left: 13px; }
.i6 { margin-left: 14px; }
.appbox { margin-left: 9px; width: 26px; height: 30px; background: #f3f3cf; border-radius: 3px; display: flex; align-items: center; justify-content: center; position: relative; flex: none; }
.underline { position: absolute; left: 8px; right: 8px; bottom: 0; height: 2px; background: #0b78d0; }
.tr { flex: none; }
.t1 { margin-left: 186px; }
.t2 { margin-left: 11px; }
.t3 { margin-left: 10px; }
.lang { margin-left: 9px; font-size: 10px; color: #222; font-family: "Noto Sans CJK TC", sans-serif; width: 11px; }
.t4 { margin-left: 10px; }
.t5 { margin-left: 5px; }
.t6 { margin-left: 4px; }
.clock { margin-left: 11px; width: 37px; text-align: right; font-size: 8.300px; line-height: 12px; color: #444; white-space: nowrap; flex: none; }
.bell { margin-left: 6px; flex: none; }
</style>
